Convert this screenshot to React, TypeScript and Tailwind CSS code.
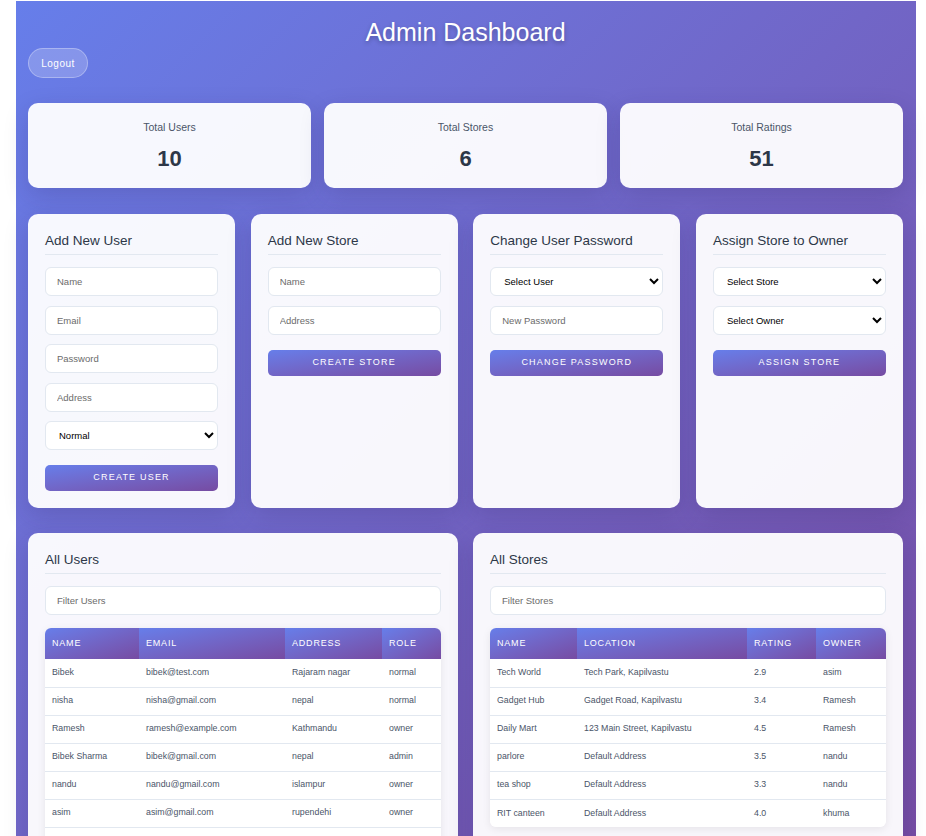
import React from "react";

const users = [
  { name: "Bibek", email: "bibek@test.com", address: "Rajaram nagar", role: "normal" },
  { name: "nisha", email: "nisha@gmail.com", address: "nepal", role: "normal" },
  { name: "Ramesh", email: "ramesh@example.com", address: "Kathmandu", role: "owner" },
  { name: "Bibek Sharma", email: "bibek@gmail.com", address: "nepal", role: "admin" },
  { name: "nandu", email: "nandu@gmail.com", address: "islampur", role: "owner" },
  { name: "asim", email: "asim@gmail.com", address: "rupendehi", role: "owner" },
  { name: "khuma", email: "khuma@gmail.com", address: "kapilvastu", role: "owner" },
];

const stores = [
  { name: "Tech World", location: "Tech Park, Kapilvastu", rating: "2.9", owner: "asim" },
  { name: "Gadget Hub", location: "Gadget Road, Kapilvastu", rating: "3.4", owner: "Ramesh" },
  { name: "Daily Mart", location: "123 Main Street, Kapilvastu", rating: "4.5", owner: "Ramesh" },
  { name: "parlore", location: "Default Address", rating: "3.5", owner: "nandu" },
  { name: "tea shop", location: "Default Address", rating: "3.3", owner: "nandu" },
  { name: "RIT canteen", location: "Default Address", rating: "4.0", owner: "khuma" },
];

const inputCls =
  "h-[29px] w-full rounded-[6px] border border-[#e2e8f0] bg-white px-[11px] text-[9.5px] text-[#2d3748] placeholder:text-[#6b6b6b] outline-none";
const selectCls =
  "h-[29px] w-full rounded-[6px] border border-[#e2e8f0] bg-white pl-[9px] pr-[6px] text-[9.5px] text-black outline-none";
const btnCls =
  "mt-[15px] h-[26px] w-full rounded-[5px] bg-gradient-to-br from-[#667eea] to-[#764ba2] text-[9px] uppercase tracking-[1.2px] text-white";
const cardCls = "rounded-[10px] bg-white/95 p-[17px] shadow-[0_8px_24px_rgba(40,30,90,0.18)]";
const thCls =
  "h-[31px] bg-gradient-to-br from-[#667eea] to-[#764ba2] px-[7px] text-left text-[9px] font-normal uppercase tracking-[0.8px] text-white";
const tdCls = "h-[28px] border-b border-[#e2e8f0] px-[7px] text-[8.8px] text-[#4a5568]";

function CardTitle({ children }: { children: React.ReactNode }) {
  return (
    <h3 className="mb-[12px] border-b border-[#e2e8f0] pb-[3px] text-[13.5px] leading-[20px] font-normal text-[#2d3748]">
      {children}
    </h3>
  );
}

function Stat({ label, value }: { label: string; value: string }) {
  return (
    <div className="flex h-[85px] flex-col items-center justify-center rounded-[10px] bg-white/95 shadow-[0_8px_24px_rgba(40,30,90,0.18)]">
      <p className="text-[10.5px] leading-[14px] text-[#4a5568]">{label}</p>
      <p className="mt-[12px] text-[22px] leading-[26px] font-bold text-[#2d3748]">{value}</p>
    </div>
  );
}

export default function App() {
  return (
    <div className="min-h-[836px] bg-white pl-[16px] pt-[1px]" style={{ fontFamily: '"Liberation Sans", Arial, sans-serif' }}>
      <div className="w-[900px] bg-gradient-to-br from-[#667eea] to-[#764ba2] pl-[12px] pr-[13px] pt-[16px] pb-[30px]">
        <h1 className="text-center text-[25px] leading-[30px] font-medium text-white [text-shadow:0_2px_4px_rgba(0,0,0,0.25)]">
          Admin Dashboard
        </h1>
        <button className="mt-[1px] h-[30px] w-[60px] rounded-full border border-white/30 bg-white/20 text-[10px] tracking-[0.5px] text-white">
          Logout
        </button>

        <div className="mt-[25px] grid grid-cols-3 gap-[13px]">
          <Stat label="Total Users" value="10" />
          <Stat label="Total Stores" value="6" />
          <Stat label="Total Ratings" value="51" />
        </div>

        <div className="mt-[26px] grid grid-cols-4 gap-[15.5px]">
          <div className={cardCls}>
            <CardTitle>Add New User</CardTitle>
            <div className="flex flex-col gap-[9.5px]">
              <input className={inputCls} placeholder="Name" />
              <input className={inputCls} placeholder="Email" />
              <input className={inputCls} placeholder="Password" />
              <input className={inputCls} placeholder="Address" />
              <select className={selectCls} defaultValue="normal">
                <option value="normal">Normal</option>
                <option value="admin">Admin</option>
                <option value="owner">Owner</option>
              </select>
            </div>
            <button className={btnCls}>Create User</button>
          </div>

          <div className={cardCls}>
            <CardTitle>Add New Store</CardTitle>
            <div className="flex flex-col gap-[9.5px]">
              <input className={inputCls} placeholder="Name" />
              <input className={inputCls} placeholder="Address" />
            </div>
            <button className={btnCls}>Create Store</button>
          </div>

          <div className={cardCls}>
            <CardTitle>Change User Password</CardTitle>
            <div className="flex flex-col gap-[9.5px]">
              <select className={selectCls} defaultValue="">
                <option value="">Select User</option>
              </select>
              <input className={inputCls} placeholder="New Password" />
            </div>
            <button className={btnCls}>Change Password</button>
          </div>

          <div className={cardCls}>
            <CardTitle>Assign Store to Owner</CardTitle>
            <div className="flex flex-col gap-[9.5px]">
              <select className={selectCls} defaultValue="">
                <option value="">Select Store</option>
              </select>
              <select className={selectCls} defaultValue="">
                <option value="">Select Owner</option>
              </select>
            </div>
            <button className={btnCls}>Assign Store</button>
          </div>
        </div>

        <div className="mt-[25px] grid grid-cols-2 gap-[15px]">
          <div className={cardCls}>
            <CardTitle>All Users</CardTitle>
            <input className={inputCls} placeholder="Filter Users" />
            <div className="mt-[13px] overflow-hidden rounded-t-[6px] shadow-[0_2px_8px_rgba(0,0,0,0.08)]">
              <table className="w-full border-collapse bg-white">
                <thead>
                  <tr>
                    <th className={`${thCls} w-[94px]`}>Name</th>
                    <th className={`${thCls} w-[146px]`}>Email</th>
                    <th className={`${thCls} w-[97px]`}>Address</th>
                    <th className={`${thCls} w-[59px]`}>Role</th>
                  </tr>
                </thead>
                <tbody>
                  {users.map((u) => (
                    <tr key={u.email}>
                      <td className={tdCls}>{u.name}</td>
                      <td className={tdCls}>{u.email}</td>
                      <td className={tdCls}>{u.address}</td>
                      <td className={tdCls}>{u.role}</td>
                    </tr>
                  ))}
                </tbody>
              </table>
            </div>
          </div>

          <div className={cardCls}>
            <CardTitle>All Stores</CardTitle>
            <input className={inputCls} placeholder="Filter Stores" />
            <div className="mt-[13px] overflow-hidden rounded-[6px] shadow-[0_2px_8px_rgba(0,0,0,0.08)]">
              <table className="w-full border-collapse bg-white">
                <thead>
                  <tr>
                    <th className={`${thCls} w-[87px]`}>Name</th>
                    <th className={`${thCls} w-[170px]`}>Location</th>
                    <th className={`${thCls} w-[69px]`}>Rating</th>
                    <th className={`${thCls} w-[70px]`}>Owner</th>
                  </tr>
                </thead>
                <tbody>
                  {stores.map((s, i) => (
                    <tr key={s.name}>
                      <td className={`${tdCls} ${i === stores.length - 1 ? "border-b-0" : ""}`}>{s.name}</td>
                      <td className={`${tdCls} ${i === stores.length - 1 ? "border-b-0" : ""}`}>{s.location}</td>
                      <td className={`${tdCls} ${i === stores.length - 1 ? "border-b-0" : ""}`}>{s.rating}</td>
                      <td className={`${tdCls} ${i === stores.length - 1 ? "border-b-0" : ""}`}>{s.owner}</td>
                    </tr>
                  ))}
                </tbody>
              </table>
            </div>
          </div>
        </div>
      </div>
    </div>
  );
}
